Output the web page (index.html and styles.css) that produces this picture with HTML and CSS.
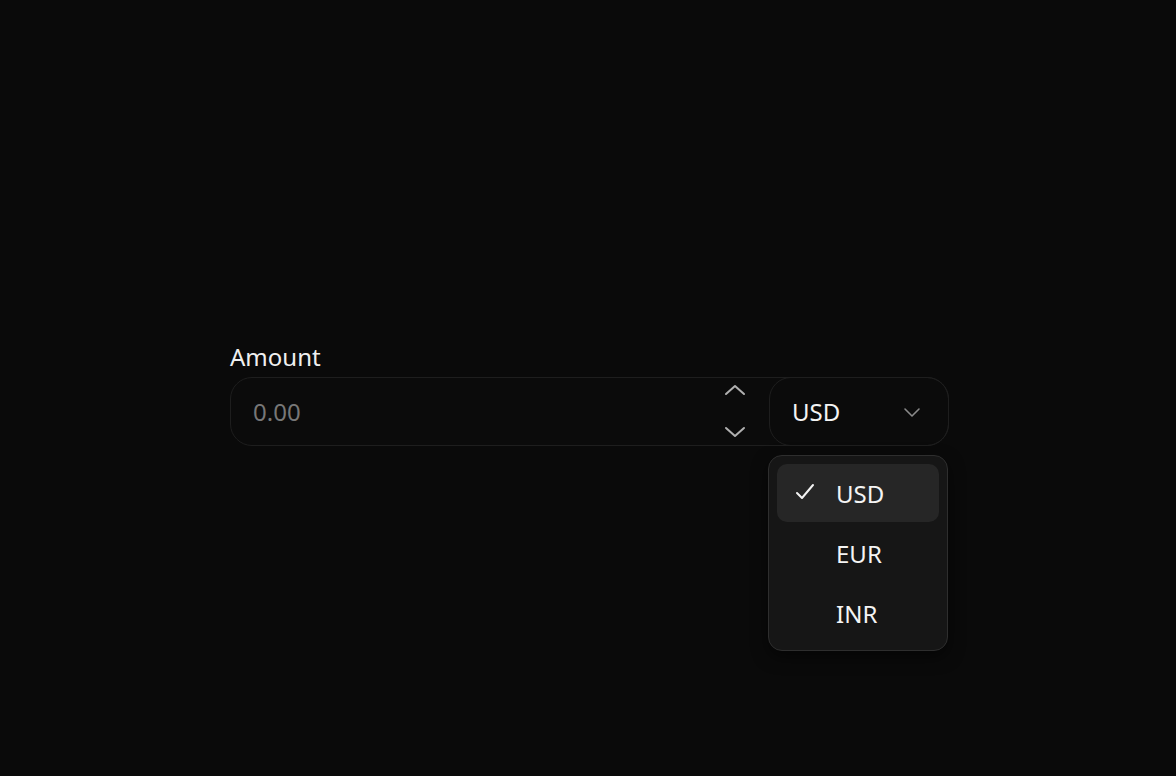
FILE: index.html
```html
<!DOCTYPE html>
<html>
<head>
<meta charset="utf-8">
<link rel="stylesheet" href="styles.css">
</head>
<body>
<div class="page">
  <div class="field">
    <label class="label">Amount</label>
    <div class="control">
      <div class="amount">
        <span class="placeholder">0.00</span>
        <div class="spinner">
          <svg width="22" height="14" viewBox="0 0 22 14"><path d="M2 11 L11 3 L20 11" fill="none" stroke="#b0b0b0" stroke-width="2" stroke-linecap="round" stroke-linejoin="round"/></svg>
          <svg width="22" height="14" viewBox="0 0 22 14"><path d="M2 3 L11 11 L20 3" fill="none" stroke="#b0b0b0" stroke-width="2" stroke-linecap="round" stroke-linejoin="round"/></svg>
        </div>
      </div>
      <div class="select">
        <span class="select-value">USD</span>
        <svg class="chev" width="20" height="12" viewBox="0 0 20 12"><path d="M3 3 L10 10 L17 3" fill="none" stroke="#8a8a8a" stroke-width="1.6" stroke-linecap="round" stroke-linejoin="round"/></svg>
      </div>
      <div class="menu">
        <div class="item active">
          <svg class="check" width="20" height="18" viewBox="0 0 20 18"><path d="M2 10 L7 15 L18 2" fill="none" stroke="#f2f2f2" stroke-width="2" stroke-linecap="round" stroke-linejoin="round"/></svg>
          <span>USD</span>
        </div>
        <div class="item"><span>EUR</span></div>
        <div class="item"><span>INR</span></div>
      </div>
    </div>
  </div>
</div>
</body>
</html>
```
FILE: styles.css
```css
html, body {
  margin: 0;
  padding: 0;
  background: #0a0a0a;
  height: 100%;
}
body {
  font-family: "Noto Sans", "Open Sans", sans-serif;
  color: #f2f2f2;
}
.page {
  padding-top: 340px;
  padding-left: 230px;
}
.field {
  width: 719px;
  display: flex;
  flex-direction: column;
}
.label {
  font-size: 24px;
  line-height: 34px;
  color: #f0f0f0;
  margin-bottom: 3px;
}
.control {
  position: relative;
  display: flex;
  height: 69px;
  box-sizing: border-box;
  border: 1px solid #1e1e1e;
  border-radius: 22px;
  background: #0b0b0b;
}
.amount {
  flex: 1;
  display: flex;
  align-items: center;
  padding-left: 22px;
  padding-right: 23px;
}
.placeholder {
  flex: 1;
  font-size: 24px;
  color: #777;
}
.spinner {
  display: flex;
  flex-direction: column;
  justify-content: space-between;
  height: 56px;
  margin-top: -2px;
}
.select {
  width: 180px;
  box-sizing: border-box;
  margin: -1px -1px -1px 0;
  border: 1px solid #1e1e1e;
  border-radius: 22px;
  display: flex;
  align-items: center;
  padding-left: 22px;
  padding-right: 26px;
}
.select-value {
  flex: 1;
  font-size: 24px;
  color: #f4f4f4;
}
.menu {
  position: absolute;
  left: 537px;
  top: 77px;
  width: 180px;
  height: 196px;
  box-sizing: border-box;
  background: #161616;
  border: 1px solid #2e2e2e;
  border-radius: 14px;
  padding: 8px;
  display: flex;
  flex-direction: column;
  gap: 2px;
  box-shadow: 0 6px 16px rgba(0,0,0,0.5);
}
.item {
  height: 58px;
  border-radius: 10px;
  display: flex;
  align-items: center;
  padding-left: 59px;
  position: relative;
  font-size: 24px;
  color: #f4f4f4;
}
.item.active {
  background: #262626;
}
.check {
  position: absolute;
  left: 18px;
  top: 19px;
}
```
